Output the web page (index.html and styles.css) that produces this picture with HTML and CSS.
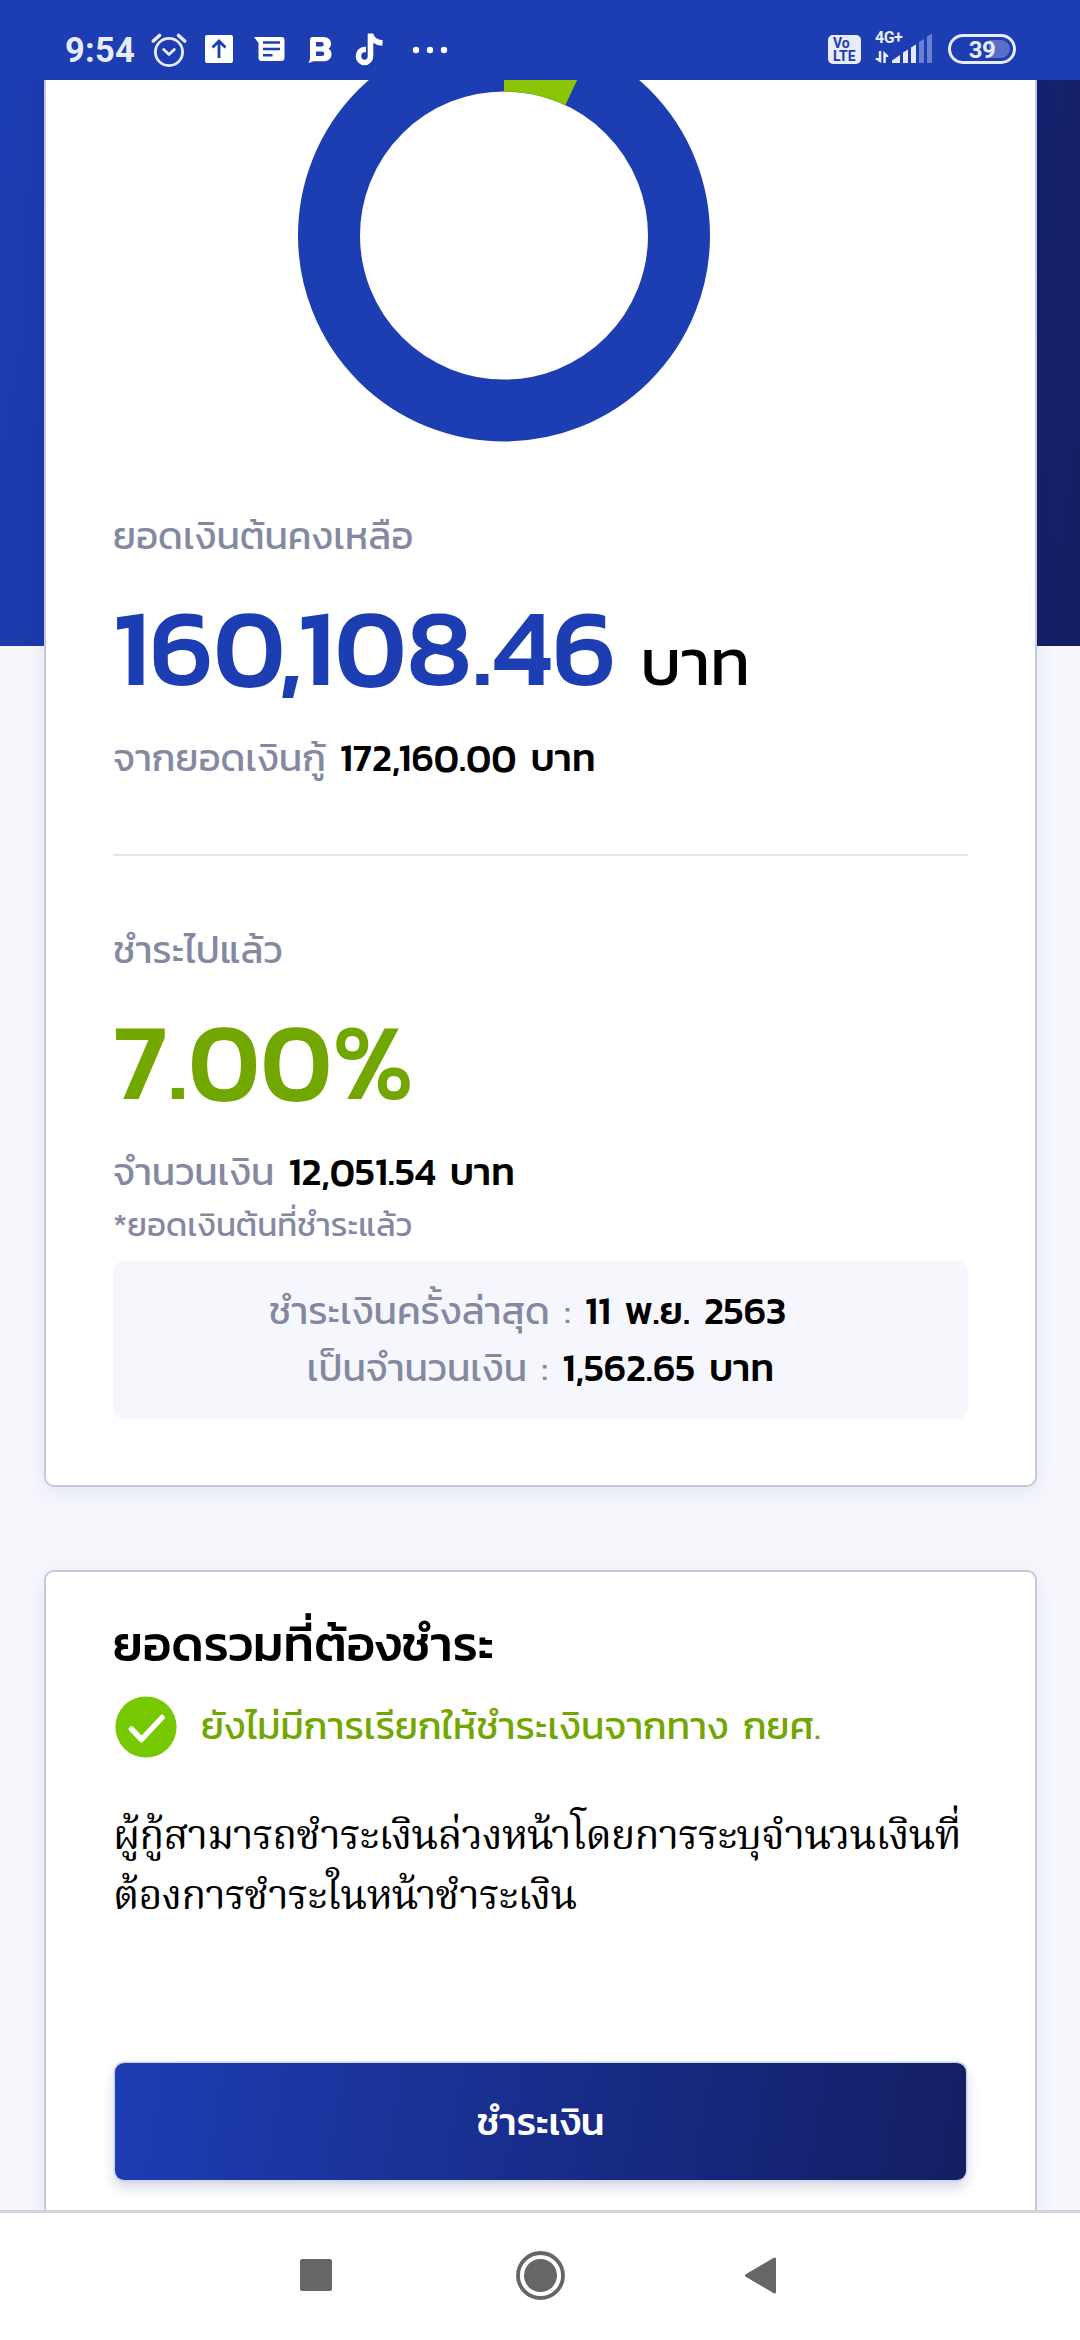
FILE: index.html
```html
<!DOCTYPE html>
<html lang="th">
<head>
<meta charset="utf-8">
<title>ยอดหนี้</title>
<link rel="stylesheet" href="styles.css">
</head>
<body>
<div class="screen">
  <header class="statusbar">
    <div class="status-left">
      <span class="clock">9:54</span>
      <svg class="status-icons" width="306" height="80" viewBox="145 0 306 80">
        <g fill="none" stroke="#e8ebfa" stroke-linecap="round" stroke-linejoin="round">
          <circle cx="169" cy="52" r="13.600" stroke-width="2.800"/>
          <path d="M163.700 49.500l5.300 5 5.300-5" stroke-width="2.800"/>
          <path d="M153.300 41l6.200-5.500M184.700 41l-6.200-5.500" stroke-width="3.600"/>
        </g>
        <rect x="205" y="35" width="28" height="28" rx="2" fill="#fff"/>
        <path d="M219 58V41M212.500 47.500l6.500-6.500 6.500 6.500" fill="none" stroke="#1d3db3" stroke-width="2.800"/>
        <path d="M254 37h27.500a3 3 0 0 1 3 3v18a3 3 0 0 1-3 3h-20a3 3 0 0 1-3-3V43z" fill="#fff"/>
        <path d="M263 42.500h17M263 49h17M263 55.200h9.500" stroke="#1d3db3" stroke-width="2.500"/>
        <path fill="#fff" fill-rule="evenodd" d="M312 37h11c5.500 0 8 3 8 6.500 0 2.500-1 4.200-2.500 5.200 2 1 3 3 3 5.500 0 4.300-3 7-8 7h-10l-5 1.800 1.500-4V40a3 3 0 0 1 2-3zM316 42v4.500h5.500a2.200 2.200 0 0 0 0-4.500zM316 51.500v4.500h6a2.200 2.200 0 0 0 0-4.500z"/>
        <path d="M370.500 33.500v22.500a6 6.500 0 1 1-6-6.500h1.500M370.500 34c1 5 5 8.500 12 9" fill="none" stroke="#fff" stroke-width="5.600"/>
        <g fill="#fff"><circle cx="416" cy="50" r="3.200"/><circle cx="430" cy="50" r="3.200"/><circle cx="444" cy="50" r="3.200"/></g>
      </svg>
    </div>
    <div class="status-right">
      <div class="volte"><span>Vo</span><span>LTE</span></div>
      <div class="signal">
        <span class="net">4G+</span>
        <svg width="57" height="31" viewBox="875 34 57 31">
          <g fill="#e8ebfa"><path d="M878.800 51h2.500v12l-5.800-3.500v-1.500h3.300zM883.300 63V51l5 4.500v1.500h-2.500v6z"/>
          <path d="M892 63v-2.500l8-5.500v8zM903 63V52.500l5-3V63zM911 63V47.500l5-3V63z"/></g>
          <g fill="#6a80d0"><path d="M919 63V42l5-3V63zM927 63V36.500l5-3V63z"/></g>
        </svg>
      </div>
      <div class="battery"><span>39</span></div>
    </div>
  </header>

  <main class="content">
    <section class="card card-balance">
      <svg class="donut" width="414" height="362" viewBox="0 -1 414 362">
        <circle cx="207" cy="154.500" r="175" fill="none" stroke="#1d3db3" stroke-width="62"/>
        <path d="M207 -51.500A206 206 0 0 1 294.700 -31.900L268.300 24.200A144 144 0 0 0 207 10.500z" fill="#8ac404"/>
      </svg>
      <p class="label">ยอดเงินต้นคงเหลือ</p>
      <p class="figure blue">160,108.46 <span class="unit">บาท</span></p>
      <p class="label">จากยอดเงินกู้ <strong>172,160.00 บาท</strong></p>
      <hr class="divider">
      <p class="label">ชำระไปแล้ว</p>
      <p class="figure green">7.00%</p>
      <p class="label">จำนวนเงิน <strong>12,051.54 บาท</strong></p>
      <p class="note">*ยอดเงินต้นที่ชำระแล้ว</p>
      <div class="latest">
        <p class="latest-date">ชำระเงินครั้งล่าสุด : <strong>11 พ.ย. 2563</strong></p>
        <p class="latest-sum">เป็นจำนวนเงิน : <strong>1,562.65 บาท</strong></p>
      </div>
    </section>

    <section class="card card-due">
      <h2 class="title">ยอดรวมที่ต้องชำระ</h2>
      <div class="state">
        <svg width="66" height="62" viewBox="0 0 66 62">
          <circle cx="33" cy="31" r="30.600" fill="#76c900"/>
          <path d="M18.500 33l10 10.500L49 21.500" fill="none" stroke="#fff" stroke-width="5.500" stroke-linecap="round" stroke-linejoin="round"/>
        </svg>
        <span>ยังไม่มีการเรียกให้ชำระเงินจากทาง กยศ.</span>
      </div>
      <p class="hint">ผู้กู้สามารถชำระเงินล่วงหน้าโดยการระบุจำนวนเงินที่<br>ต้องการชำระในหน้าชำระเงิน</p>
      <button class="pay">ชำระเงิน</button>
    </section>
  </main>

  <nav class="navbar">
    <svg width="480" height="60" viewBox="300 2245 480 60" fill="#666">
      <rect x="300" y="2259" width="32" height="32" rx="2"/>
      <circle cx="540.500" cy="2275.500" r="22.500" fill="none" stroke="#666" stroke-width="3.800"/>
      <circle cx="540.500" cy="2275.500" r="16.500"/>
      <path d="M746.500 2275.500L774.500 2259V2292z" stroke="#666" stroke-width="3" stroke-linejoin="round"/>
    </svg>
  </nav>
</div>
</body>
</html>
```
FILE: styles.css
```css
* { box-sizing: border-box; margin: 0; padding: 0; }
body { width: 1080px; height: 2340px; overflow: hidden; font-family: Kanit, "Noto Sans Thai", "Noto Sans", sans-serif; }
.screen { display: flex; flex-direction: column; height: 2340px; background: #f6f7fd; }

.statusbar { flex: none; display: flex; justify-content: space-between; height: 80px; padding: 0 64px 0 65px; background: #1d3db3; color: #e8ebfa; font-family: Roboto, sans-serif; font-weight: 500; }
.status-left { display: flex; }
.clock { width: 80px; padding-top: 19px; font-size: 34.5px; font-weight: 700; line-height: 62px; letter-spacing: 0.2px; white-space: nowrap; }
.status-icons { display: block; }
.status-right { display: flex; align-items: flex-start; }
.volte { display: flex; flex-direction: column; width: 33px; height: 29px; margin: 35px 14px 0 0; padding: 2px 0 0 5px; border-radius: 5px; background: #e8ebfa; color: #1d3db3; font: 700 14px/12.5px Roboto, sans-serif; }
.signal { position: relative; height: 31px; margin-top: 34px; }
.signal svg { display: block; }
.net { position: absolute; left: 0; top: -4px; font-size: 16px; line-height: 16px; font-weight: 700; letter-spacing: -0.5px; }
.battery { position: relative; width: 68px; height: 30px; margin: 34px 0 0 16px; border: 3px solid #e8ebfa; border-radius: 16px; text-align: center; font-size: 24px; line-height: 26px; font-weight: 700; letter-spacing: -0.5px; }
.battery::before { content: ""; position: absolute; right: 3px; top: 3px; width: 21px; height: 18px; border-radius: 0 9px 9px 0; background: #5a70c8; }
.battery span { position: relative; }

.content { flex: none; height: 2130px; padding: 0 43px 0 44px; overflow: hidden; background: linear-gradient(100deg, #1d3db3 0%, #131e63 100%) 0 0 / 100% 566px no-repeat; }
.card { width: 993px; padding: 0 67px; border: 2px solid #c6c9de; background: #fff; box-shadow: 0 6px 20px rgba(30, 36, 110, 0.08); }
.card-balance { height: 1407px; border-top: 0; border-radius: 0 0 10px 10px; }
.donut { display: block; margin-left: 184px; }
.label { height: 58px; font-size: 38.5px; line-height: 58px; color: #8489a1; white-space: nowrap; word-spacing: 5.4px; }
.label strong, .latest strong { font-weight: 500; color: #000; }
.donut + .label { margin-top: 65px; }
.figure { height: 110px; margin: 26px 0 28px; font-size: 110px; line-height: 110px; font-weight: 500; white-space: nowrap; }
.blue { color: #1d3db3; }
.green { color: #72a600; }
.unit { font-size: 66px; font-weight: 400; color: #000; }
.divider { height: 2px; margin: 67px 0 65px; border: 0; background: #e3e5ea; }
.note { height: 49px; font-size: 33px; line-height: 48px; color: #8489a1; }
.latest { height: 158px; margin-top: 11px; padding-top: 21px; border-radius: 11px; background: #f6f7fd; font-size: 38.5px; line-height: 57px; color: #8489a1; text-align: center; word-spacing: 5.4px; }
.latest-date { padding-right: 26px; }

.card-due { height: 700px; margin-top: 83px; padding-top: 42px; border-radius: 10px; }
.title { height: 60px; font-size: 49.5px; line-height: 60px; font-weight: 500; }
.state { display: flex; align-items: center; gap: 22px; height: 62px; margin-top: 22px; font-size: 38.5px; color: #72a600; word-spacing: 5.4px; }
.state span { padding-bottom: 3px; line-height: 58px; white-space: nowrap; }
.hint { height: 120px; margin-top: 50px; font: 41.25px/60px "Noto Serif Thai", serif; letter-spacing: -0.9px; white-space: nowrap; }
.pay { display: block; width: 851px; height: 117px; margin: 135px 0 0 2px; border: 0; border-radius: 9px; background: linear-gradient(100deg, #1d3db3, #131e63); box-shadow: 0 0 0 1.500px #cdd4ec, 0 7px 14px rgba(30, 30, 110, 0.2); color: #fff; font: 500 38.500px/58px Kanit, "Noto Sans Thai", sans-serif; }

.navbar { flex: 1; display: flex; justify-content: center; padding-top: 32px; border-top: 3px solid #d2d3da; background: #fff; }
```
